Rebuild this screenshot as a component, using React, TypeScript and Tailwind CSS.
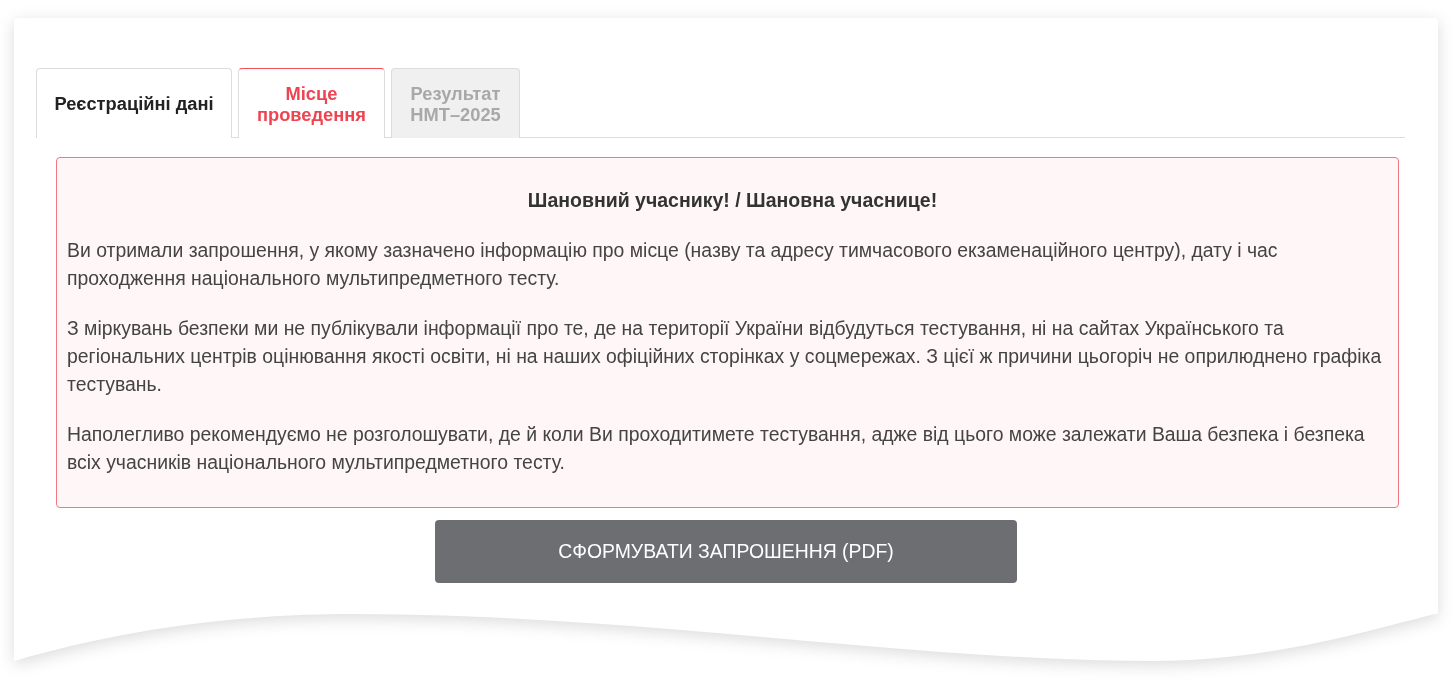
export default function App() {
  const tabs = [
    { label: "Реєстраційні дані", state: "normal", width: "w-[196px]" },
    { label: "Місце\nпроведення", state: "active", width: "w-[147px]" },
    { label: "Результат\nНМТ–2025", state: "disabled", width: "w-[129px]" },
  ];

  const paragraphs = [
    [
      "Ви отримали запрошення, у якому зазначено інформацію про місце (назву та адресу тимчасового екзаменаційного центру), дату і час",
      "проходження національного мультипредметного тесту.",
    ],
    [
      "З міркувань безпеки ми не публікували інформації про те, де на території України відбудуться тестування, ні на сайтах Українського та",
      "регіональних центрів оцінювання якості освіти, ні на наших офіційних сторінках у соцмережах. З цієї ж причини цьогоріч не оприлюднено графіка",
      "тестувань.",
    ],
    [
      "Наполегливо рекомендуємо не розголошувати, де й коли Ви проходитимете тестування, адже від цього може залежати Ваша безпека і безпека",
      "всіх учасників національного мультипредметного тесту.",
    ],
  ];

  return (
    <div
      className="min-h-screen bg-white pt-[18px]"
      style={{ fontFamily: '"Liberation Sans", Arial, sans-serif' }}
    >
      <div className="ml-[14px] w-[1424px] drop-shadow-[0_4px_8px_rgba(0,0,0,0.14)]">
        <div className="rounded-t-[4px] bg-white pb-[31px] pl-[22px] pr-[33px] pt-[50px]">
          {/* tabs */}
          <div className="flex gap-[6px] border-b border-[#dcdcdc]">
            {tabs.map((t) => (
              <div
                key={t.label}
                className={
                  "-mb-px flex h-[70px] items-center justify-center whitespace-pre-line rounded-t-[4px] border border-b-0 text-center text-[18.3px] font-bold leading-[21px] " +
                  t.width +
                  (t.state === "active"
                    ? " border-[#dcdcdc] border-t-[#f0505a] bg-white text-[#ee4452]"
                    : t.state === "disabled"
                      ? " border-[#dcdcdc] bg-[#f0f0f0] text-[#a8a8a8] border-b"
                      : " border-[#dcdcdc] bg-white text-[#222] border-b")
                }
              >
                {t.label}
              </div>
            ))}
          </div>

          {/* notice */}
          <div className="ml-[20px] mr-[6px] mt-[19px] rounded-[4px] border border-[#ef7880] bg-[#fff6f7] pb-[9px] pl-[10px] pr-0 pt-[28px] text-[19.4px] leading-[28px] text-[#444]">
            <p className="mb-[22px] text-center text-[19.5px] font-bold text-[#333]">
              Шановний учаснику! / Шановна учаснице!
            </p>
            {paragraphs.map((lines, i) => (
              <p key={i} className="mb-[22px] whitespace-nowrap">
                {lines.map((line, j) => (
                  <span key={j}>
                    {line}
                    {j < lines.length - 1 ? <br /> : null}
                  </span>
                ))}
              </p>
            ))}
          </div>

          {/* button */}
          <div className="mt-[12px] flex justify-center pl-[11px]">
            <button
              type="button"
              className="h-[63px] w-[582px] rounded-[4px] bg-[#6d6e72] text-[19.4px] uppercase text-white"
            >
              Сформувати запрошення (PDF)
            </button>
          </div>
        </div>

        {/* wavy bottom edge */}
        <svg
          className="-mt-px block"
          width="1424"
          height="50"
          viewBox="0 0 1424 50"
          preserveAspectRatio="none"
        >
          <path
            d="M0 0 H1424 V0 C1340 22 1250 48 1136 48 C900 48 620 1 340 1 C200 1 90 22 0 48 Z"
            fill="#ffffff"
          />
        </svg>
      </div>
    </div>
  );
}
